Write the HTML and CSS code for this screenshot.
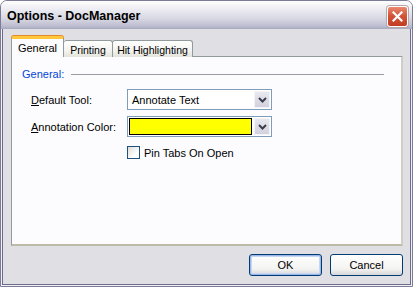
FILE: index.html
```html
<!DOCTYPE html>
<html lang="en">
<head>
  <meta charset="UTF-8">
  <title>Options - DocManager</title>
  <link rel="stylesheet" href="styles.css">
</head>
<body>
<div class="window">
  <div class="titlebar">
    <span class="title">Options - DocManager</span>
    <div class="close">
      <svg width="11" height="11" viewBox="0 0 11 11"><path d="M1.5 1.5 L9.5 9.5 M9.5 1.5 L1.5 9.5" stroke="#fff" stroke-width="2.2" stroke-linecap="square"/></svg>
    </div>
  </div>
  <div class="client">
    <div class="tabs">
      <div class="tab active">General</div>
      <div class="tab printing">Printing</div>
      <div class="tab hits">Hit Highlighting</div>
    </div>
    <div class="panel">
      <div class="group-head">
        <span>General:</span>
        <div class="rule"></div>
      </div>
      <div class="field">
        <label><u>D</u>efault Tool:</label>
        <div class="combo">
          <span class="value">Annotate Text</span>
          <div class="drop"><svg width="9" height="6" viewBox="0 0 9 6"><path d="M1 1 L4.5 4.5 L8 1" fill="none" stroke="#3c3c4c" stroke-width="2"/></svg></div>
        </div>
      </div>
      <div class="field">
        <label><u>A</u>nnotation Color:</label>
        <div class="combo">
          <span class="swatch"></span>
          <div class="drop"><svg width="9" height="6" viewBox="0 0 9 6"><path d="M1 1 L4.5 4.5 L8 1" fill="none" stroke="#3c3c4c" stroke-width="2"/></svg></div>
        </div>
      </div>
      <div class="check-row">
        <span class="checkbox"></span>
        <span>Pin Tabs On Open</span>
      </div>
    </div>
    <div class="buttons">
      <div class="btn default">OK</div>
      <div class="btn">Cancel</div>
    </div>
  </div>
</div>
</body>
</html>
```

FILE: styles.css
```css
body {
  margin: 0;
  font-family: "Liberation Sans", Arial, sans-serif;
  font-size: 11px;
  color: #000;
  background: #fff;
}
.window {
  width: 413px;
  height: 287px;
  box-sizing: border-box;
  border: 1px solid #7c7b98;
  border-radius: 7px 7px 0 0;
  background: #f1f1f5;
  display: flex;
  flex-direction: column;
  overflow: hidden;
}
.titlebar {
  height: 28px;
  flex: none;
  display: flex;
  align-items: center;
  justify-content: space-between;
  padding: 0 4px 0 6px;
  background: linear-gradient(#fefefe, #ececf2 30%, #d6d6e2 65%, #bcbccf 90%, #a8a8be);
}
.title {
  font-weight: bold;
  font-size: 12.5px;
  color: #000;
  margin-top: 1px;
}
.close {
  width: 19px;
  height: 19px;
  margin-top: 2px;
  border: 1px solid #fff;
  border-radius: 3px;
  background: linear-gradient(#e98a70, #d4553a 45%, #c23c20);
  box-shadow: 0 0 0 1px #b7a7a7;
  display: flex;
  align-items: center;
  justify-content: center;
}
.client {
  flex: 1;
  margin: 0 1px 1px;
  border: 1px solid #6d6c8b;
  border-top: none;
  background: #e0dfe3;
  display: flex;
  flex-direction: column;
  padding: 7px 7px 0 8px;
}
.tabs {
  display: flex;
  align-items: flex-end;
  height: 21px;
  position: relative;
  z-index: 1;
}
.tab {
  box-sizing: border-box;
  height: 17px;
  border: 1px solid #919b9c;
  border-bottom: none;
  border-radius: 3px 3px 0 0;
  background: linear-gradient(#ffffff, #f3f3f0 60%, #e4e3dc);
  display: flex;
  align-items: center;
  justify-content: center;
  padding-top: 1px;
  margin-left: -1px;
  font-size: 10.5px;
}
.tab.active {
  width: 53px;
  height: 21px;
  margin-left: 0;
  background: #fcfcfe;
  border-top: 3px solid #ffc73c;
  box-shadow: 0 -1px 0 #e68b2c;
  padding-top: 0;
  padding-bottom: 1px;
  font-size: 11px;
  z-index: 2;
}
.tab.printing {
  width: 49px;
  border-left: none;
  margin-left: 0;
}
.tab.hits {
  width: 81px;
}
.panel {
  height: 190px;
  box-sizing: border-box;
  margin-top: -1px;
  border: 1px solid #919b9c;
  border-right: 2px solid #cfcec4;
  border-bottom: 2px solid #bcbbaa;
  background: #fcfcfe;
  display: flex;
  flex-direction: column;
  padding: 10px 17px 0 10px;
}
.group-head {
  display: flex;
  align-items: center;
  height: 14px;
  color: #0046d5;
}
.rule {
  flex: 1;
  height: 1px;
  margin-left: 7px;
  background: #9b9ba6;
}
.field {
  display: flex;
  align-items: center;
  padding-left: 9px;
  margin-top: 8px;
}
.field + .field {
  margin-top: 6px;
}
.field label {
  width: 96px;
}
.combo {
  width: 145px;
  height: 21px;
  box-sizing: border-box;
  border: 1px solid #7f9db9;
  background: #fff;
  display: flex;
  align-items: center;
  padding: 1px;
}
.value {
  flex: 1;
  padding-left: 3px;
}
.swatch {
  flex: 1;
  height: 17px;
  box-sizing: border-box;
  border: 1px solid #000;
  background: #ffff00;
  margin-right: 2px;
}
.drop {
  width: 16px;
  height: 17px;
  box-sizing: border-box;
  border: 1px solid #f4f4f8;
  background: linear-gradient(#e8e8ef, #d2d1dd);
  display: flex;
  align-items: center;
  justify-content: center;
}
.check-row {
  display: flex;
  align-items: center;
  padding-left: 105px;
  margin-top: 9px;
}
.checkbox {
  width: 13px;
  height: 13px;
  box-sizing: border-box;
  border: 1px solid #1c5180;
  background: linear-gradient(135deg, #dcdcd7, #fff 70%);
  margin-right: 4px;
}
.buttons {
  display: flex;
  justify-content: flex-end;
  gap: 8px;
  margin-top: 8px;
}
.btn {
  width: 73px;
  height: 22px;
  box-sizing: border-box;
  border: 1px solid #003c74;
  border-radius: 3px;
  background: linear-gradient(#ffffff, #f3f3f1 70%, #d6d5d9);
  display: flex;
  align-items: center;
  justify-content: center;
}
.btn.default {
  box-shadow: inset 0 0 0 1px #9db7e8, inset 0 0 0 2px #c6d6f3;
}
```
